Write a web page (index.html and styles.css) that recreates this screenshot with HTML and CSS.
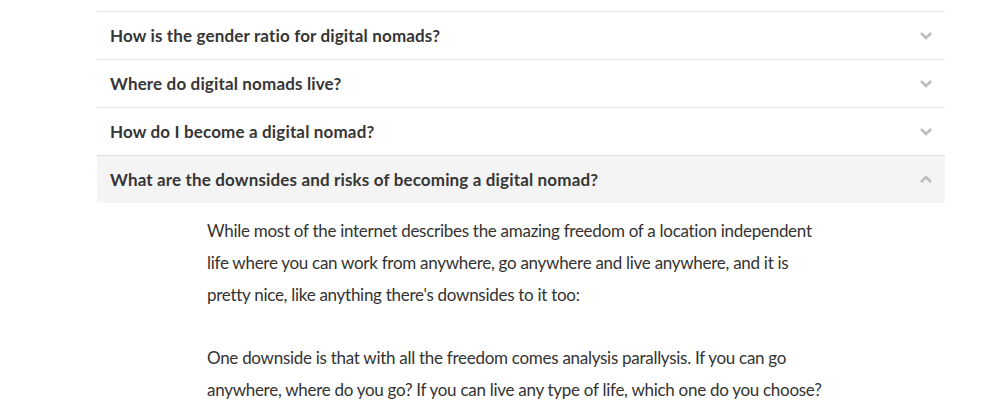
FILE: index.html
```html
<!DOCTYPE html>
<html>
<head>
<meta charset="utf-8">
<link rel="stylesheet" href="styles.css">
</head>
<body>
<div class="faq">
  <div class="item">
    <div class="q"><span class="q-text">How is the gender ratio for digital nomads?</span>
      <svg class="chev" width="14" height="9" viewBox="0 0 14 9"><path d="M2 2 L7 7 L12 2" /></svg></div>
  </div>
  <div class="item">
    <div class="q"><span class="q-text">Where do digital nomads live?</span>
      <svg class="chev" width="14" height="9" viewBox="0 0 14 9"><path d="M2 2 L7 7 L12 2" /></svg></div>
  </div>
  <div class="item">
    <div class="q"><span class="q-text">How do I become a digital nomad?</span>
      <svg class="chev" width="14" height="9" viewBox="0 0 14 9"><path d="M2 2 L7 7 L12 2" /></svg></div>
  </div>
  <div class="item open">
    <div class="q"><span class="q-text">What are the downsides and risks of becoming a digital nomad?</span>
      <svg class="chev" width="14" height="9" viewBox="0 0 14 9"><path d="M2 7 L7 2 L12 7" /></svg></div>
    <div class="answer">
      <p>While most of the internet describes the amazing freedom of a location independent life where you can work from anywhere, go anywhere and live anywhere, and it is pretty nice, like anything there's downsides to it too:</p>
      <p>One downside is that with all the freedom comes analysis parallysis. If you can go anywhere, where do you go? If you can live any type of life, which one do you choose?</p>
    </div>
  </div>
</div>
</body>
</html>
```

FILE: styles.css
```css
html, body {
  margin: 0;
  padding: 0;
  background: #fff;
}
body {
  font-family: "Lato", "Noto Sans", sans-serif;
  color: #333;
  overflow: hidden;
}
.faq {
  margin: 11px 0 0 97px;
  width: 848px;
}
.item {
  border-top: 1px solid #e2e2e2;
}
.q {
  height: 47px;
  display: flex;
  align-items: center;
  justify-content: space-between;
  padding: 0 12px 0 13px;
}
.open .q {
  background: #f4f4f4;
}
.q-text {
  font-weight: 700;
  font-size: 17px;
  letter-spacing: 0.15px;
  color: #363636;
}
.chev {
  fill: none;
  stroke: #bdbdbd;
  stroke-width: 2.5;
}
.answer {
  padding: 12px 0 0 110px;
  width: 628px;
}
.answer p {
  margin: 0 0 31px;
  font-size: 17px;
  line-height: 32px;
  letter-spacing: -0.28px;
  color: #333;
}
```
